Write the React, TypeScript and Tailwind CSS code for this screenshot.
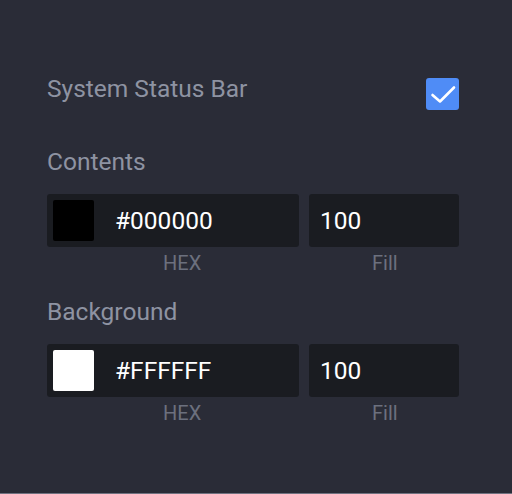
const SECTIONS = [
  { label: "Contents", hex: "#000000", swatch: "bg-black", fill: "100" },
  { label: "Background", hex: "#FFFFFF", swatch: "bg-white", fill: "100" },
];

function ColorRow({ hex, swatch, fill }: { hex: string; swatch: string; fill: string }) {
  return (
    <div className="flex flex-col">
      <div className="flex gap-[10px]">
        <div className="flex h-[53px] w-[252px] items-center rounded-[3px] bg-[#1a1c21] pl-[6px]">
          <div className={`h-[41px] w-[41px] rounded-[2px] ${swatch}`} />
          <span className="ml-[21px] text-[24.5px] leading-[28px] text-white">{hex}</span>
        </div>
        <div className="flex h-[53px] w-[150px] items-center rounded-[3px] bg-[#1a1c21] pl-[11px]">
          <span className="text-[24.5px] leading-[28px] text-white">{fill}</span>
        </div>
      </div>
      <div className="mt-[4px] flex text-[20px] leading-[24px] text-[#6c707e]">
        <span className="w-[272px] pl-[116px]">HEX</span>
        <span className="w-[140px] pl-[53px]">Fill</span>
      </div>
    </div>
  );
}

export default function App() {
  return (
    <div
      className="h-[494px] w-[512px] border-b border-[#6f7280] bg-[#2a2c37] pl-[47px] pr-[53px] pt-[75px]"
      style={{ fontFamily: "Roboto, 'Noto Sans', sans-serif" }}
    >
      {/* status bar toggle */}
      <div className="flex items-start justify-between">
        <span className="text-[24.5px] leading-[28px] text-[#8e93a2]">System Status Bar</span>
        <div className="mt-[3px] h-[32px] w-[33px] rounded-[3px] bg-[#4f8cf6]">
          <svg width="33" height="32" viewBox="0 0 33 32" fill="none">
            <polyline
              points="6.5,17 14,23.5 28,9.5"
              stroke="white"
              strokeWidth="2.6"
              strokeLinecap="round"
              strokeLinejoin="round"
            />
          </svg>
        </div>
      </div>

      <div className="mt-[38px] flex flex-col gap-[23px]">
        {SECTIONS.map((s) => (
          <div key={s.label} className="flex flex-col">
            <span className="mb-[18px] text-[24.5px] leading-[28px] text-[#8e93a2]">{s.label}</span>
            <ColorRow hex={s.hex} swatch={s.swatch} fill={s.fill} />
          </div>
        ))}
      </div>
    </div>
  );
}
